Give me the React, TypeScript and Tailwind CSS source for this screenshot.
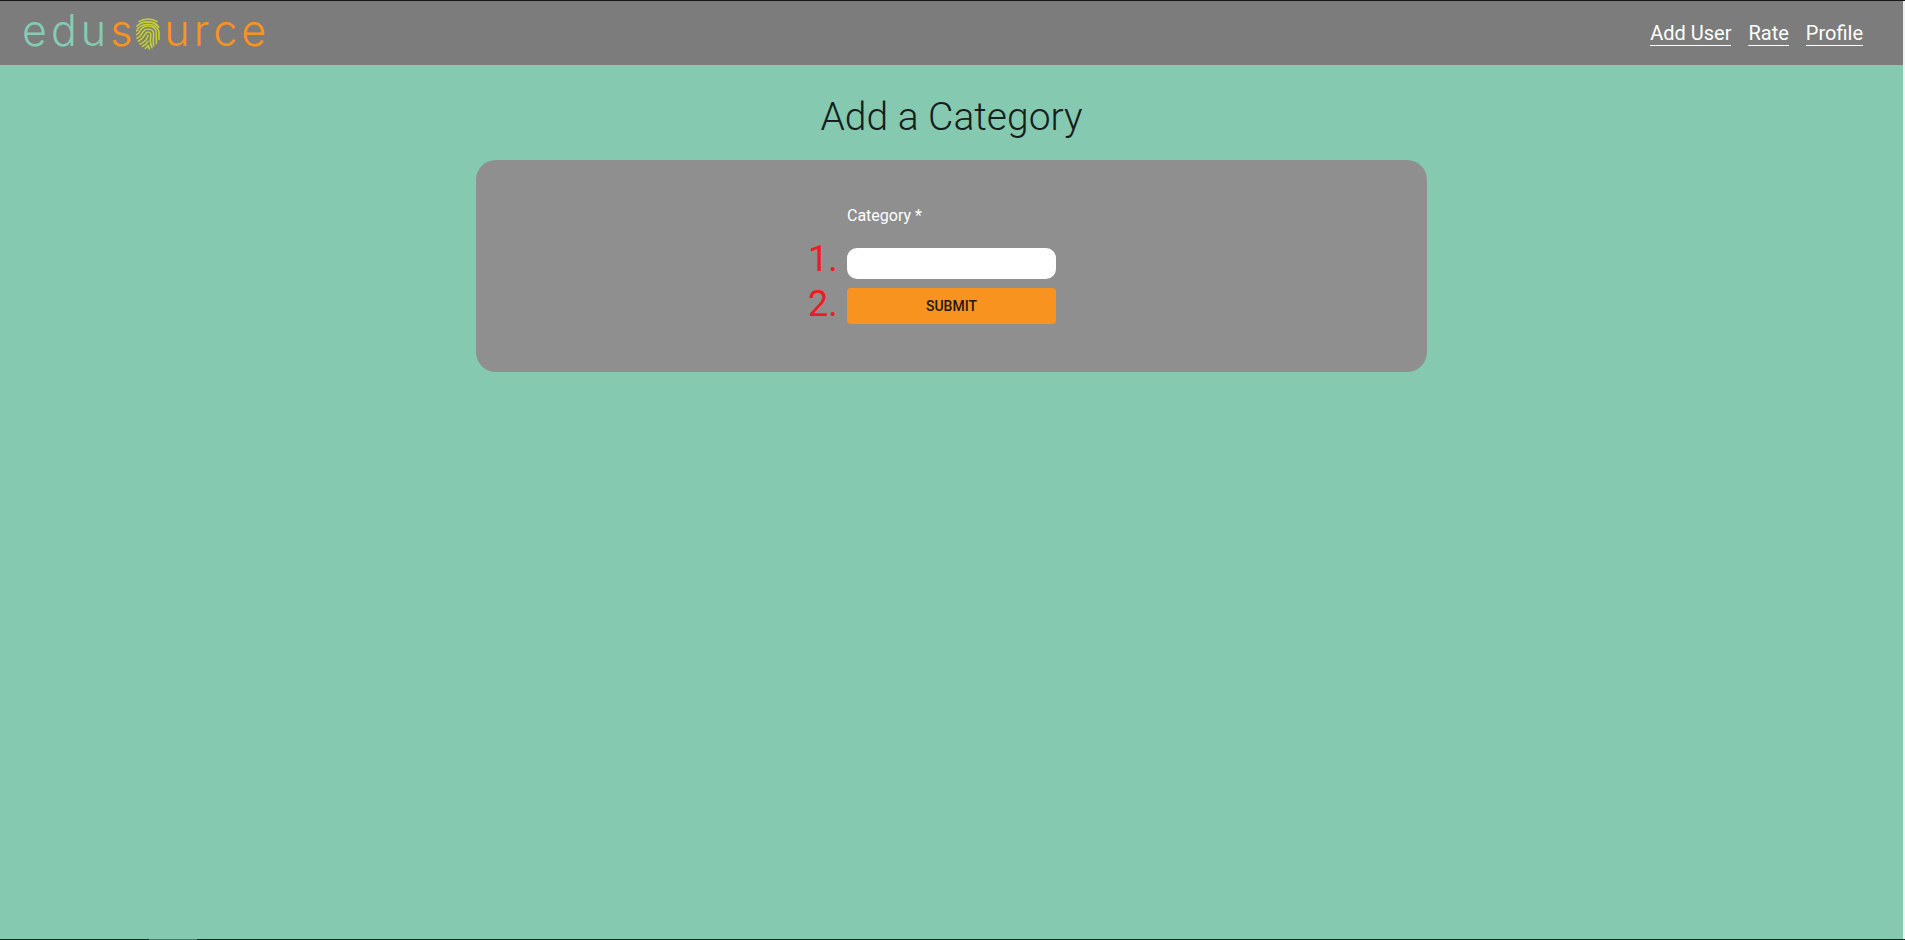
const letters = [
  { char: "e", tone: "text-[#86cbb4]" },
  { char: "d", tone: "text-[#86cbb4]" },
  { char: "u", tone: "text-[#86cbb4]" },
  { char: "s", tone: "text-[#f9931f]" },
  { char: "o", tone: "" },
  { char: "u", tone: "text-[#f9931f]" },
  { char: "r", tone: "text-[#f9931f]" },
  { char: "c", tone: "text-[#f9931f]" },
  { char: "e", tone: "text-[#f9931f]" },
];

function Fingerprint() {
  return (
    <svg
      aria-hidden="true"
      className="mt-2 h-8 w-6 shrink-0"
      viewBox="0 0 72 96"
      fill="none"
      stroke="#c3d02f"
      strokeWidth="4.8"
      strokeLinecap="round"
    >
      <path d="M9 11C25 1 47 1 63 11" />
      <path d="M3 25C16 8 54 6 68 27" />
      <path d="M2 39C9 14 61 9 69 42V64" />
      <path d="M2 50C14 43 12 24 36 24C53 24 61 34 61 47V76" />
      <path d="M3 61C22 52 17 33 36 33C48 33 53 40 53 49C53 59 50 66 53 83" />
      <path d="M7 70C29 60 24 42 36 42C44 42 46 48 44 55C42 65 40 72 48 89" />
      <path d="M12 78C30 70 33 62 36 52" />
      <path d="M19 85C28 81 33 76 36 70" />
      <path d="M28 91C33 88 36 85 37 81L40 93" />
    </svg>
  );
}

function Logo() {
  return (
    <a
      href="#home"
      aria-label="edusource"
      className="-mt-1.5 flex items-center gap-1 font-['Inter',sans-serif] text-[43px] leading-none font-light"
    >
      {letters.map(({ char, tone }, index) =>
        char === "o" ? (
          <Fingerprint key={index} />
        ) : (
          <span key={index} className={tone}>
            {char}
          </span>
        ),
      )}
    </a>
  );
}

const links = ["Add User", "Rate", "Profile"];

export default function App() {
  return (
    <div className="flex min-h-screen flex-col border-t border-[#161616] bg-[#86c9b1] font-['Roboto',sans-serif]">
      <div className="flex grow flex-col border-r-2 border-[#f1f1f1]">
        <header className="flex h-16 items-center justify-between bg-[#7c7c7c] pr-10 pl-[22px]">
          <Logo />
          <nav className="flex gap-[17px] text-xl leading-6 text-white">
            {links.map((label) => (
              <a key={label} href="#nav" className="border-b border-white">
                {label}
              </a>
            ))}
          </nav>
        </header>
        <main className="flex flex-col items-center pt-7">
          <h1 className="text-[39px] leading-12 font-light text-[#15201c]">Add a Category</h1>
          <section className="mt-[19px] flex w-1/2 justify-center rounded-[20px] bg-[#8f8f8f] py-12">
            <form className="flex w-[209px] flex-col" onSubmit={(event) => event.preventDefault()}>
              <label htmlFor="category" className="text-base leading-4 text-white">
                Category *
              </label>
              <div className="relative mt-6">
                <span className="absolute right-full bottom-0 mr-[11px] w-7 text-4xl leading-10 text-[#ed1c24]">
                  1.
                </span>
                <input
                  id="category"
                  type="text"
                  required
                  className="block h-[31px] w-full rounded-[10px] bg-white px-2 text-black outline-none"
                />
              </div>
              <div className="relative mt-[9px]">
                <span className="absolute right-full bottom-0 mr-[11px] w-7 text-4xl leading-10 text-[#ed1c24]">
                  2.
                </span>
                <button
                  type="submit"
                  className="block h-9 w-full rounded bg-[#f9931f] text-sm font-medium text-[#21190d]"
                >
                  SUBMIT
                </button>
              </div>
            </form>
          </section>
        </main>
      </div>
      <div className="flex h-px bg-[#1b2622] pl-[149px]">
        <div className="w-12 bg-[#5b7269]" />
      </div>
    </div>
  );
}
